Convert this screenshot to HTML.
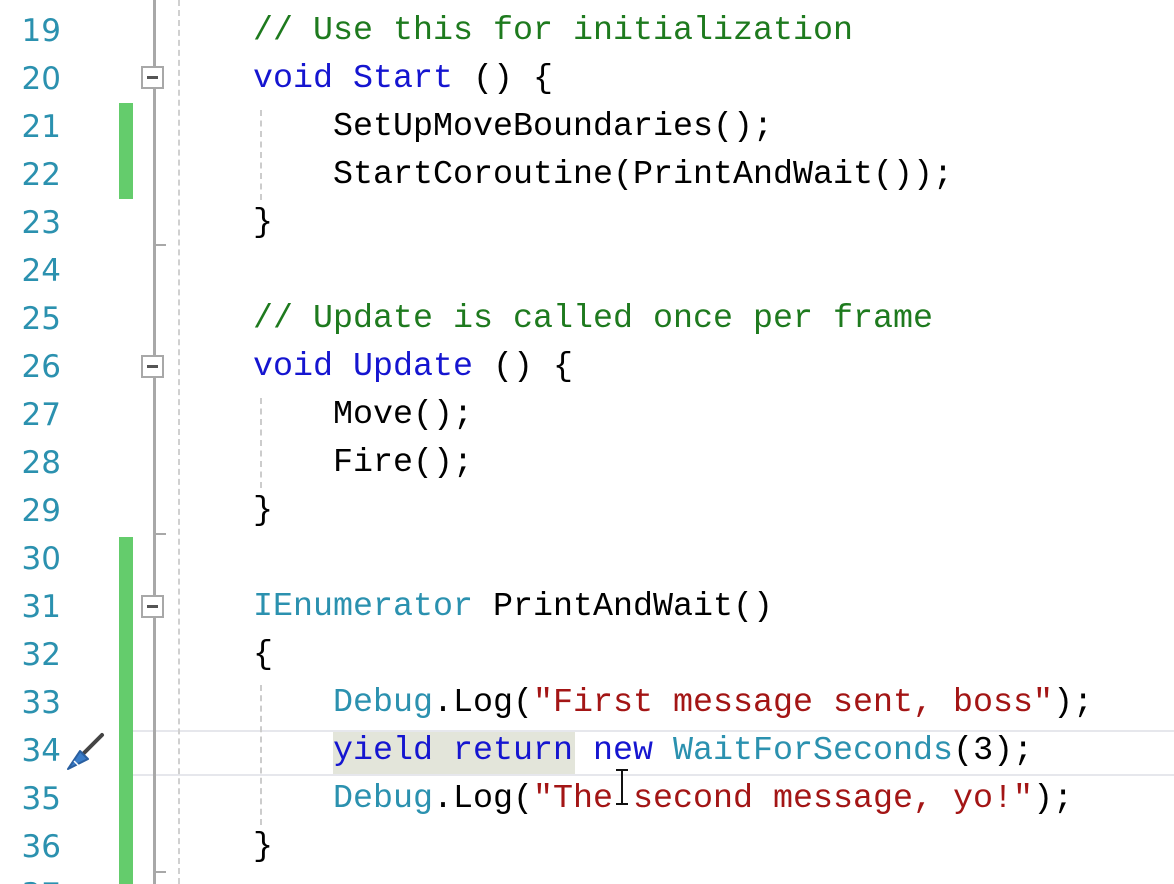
<!DOCTYPE html>
<html><head><meta charset="utf-8"><style>
html,body{margin:0;width:1174px;height:884px;overflow:hidden;}
body{background:#fff;position:relative;font-family:"Liberation Mono",monospace;}
.w{position:absolute;left:0;top:2px;width:1174px;height:884px;}
.n{position:absolute;left:0;width:61px;text-align:right;font-size:31px;color:#2b91af;line-height:48px;height:48px;font-family:"DejaVu Sans","Liberation Sans",sans-serif;}
.c{position:absolute;left:253px;font-size:33.33px;line-height:48px;height:48px;white-space:pre;color:#000;}
.k{color:#1515d0}.t{color:#2b91af}.s{color:#a31515}.g{color:#1e7a1e}
.fold{position:absolute;left:141px;width:19px;height:19px;border:2px solid #a8a8a8;background:#fff;}
.fold:after{content:"";position:absolute;left:4px;top:8px;width:11px;height:3px;background:#555;}
.tick{position:absolute;left:154px;width:12px;height:2px;background:#a8a8a8}
.dg{position:absolute;width:0;border-left:2px dashed #ccc}
</style></head><body>
<div style="position:absolute;left:124px;top:730px;width:1060px;height:42px;border:2px solid #e6e7ec;border-right:none"></div>
<div style="position:absolute;left:333px;top:732px;width:242px;height:42px;background:#e3e5da"></div>
<div style="position:absolute;left:119px;top:103px;width:14px;height:96px;background:#64cc6c"></div>
<div style="position:absolute;left:119px;top:537px;width:14px;height:347px;background:#64cc6c"></div>
<div style="position:absolute;left:153px;top:0;width:3px;height:884px;background:#a8a8a8"></div>
<div class="tick" style="top:244px"></div>
<div class="tick" style="top:533px"></div>
<div class="tick" style="top:871px"></div>
<div class="fold" style="top:66px"></div>
<div class="fold" style="top:355px"></div>
<div class="fold" style="top:595px"></div>
<div class="dg" style="left:178px;top:0;height:884px;border-color:#d0d0d0"></div>
<div class="dg" style="left:260px;top:110px;height:90px"></div>
<div class="dg" style="left:260px;top:398px;height:90px"></div>
<div class="dg" style="left:260px;top:685px;height:140px"></div>
<svg style="position:absolute;left:64px;top:731px" width="44" height="44" viewBox="0 0 44 44"><line x1="20" y1="22" x2="38" y2="4" stroke="#444" stroke-width="4" stroke-linecap="round"/><path d="M4 38 L16 20 L24 28 Z" fill="#3a7cc8" stroke="#2a5fa0" stroke-width="2" stroke-linejoin="round"/><line x1="10" y1="30" x2="16" y2="36" stroke="#fff" stroke-width="1.5"/></svg>
<div class="w">
<div class="n" style="top:5px">19</div><div class="n" style="top:53px">20</div><div class="n" style="top:101px">21</div><div class="n" style="top:149px">22</div><div class="n" style="top:197px">23</div><div class="n" style="top:245px">24</div><div class="n" style="top:293px">25</div><div class="n" style="top:341px">26</div><div class="n" style="top:389px">27</div><div class="n" style="top:437px">28</div><div class="n" style="top:485px">29</div><div class="n" style="top:533px">30</div><div class="n" style="top:581px">31</div><div class="n" style="top:629px">32</div><div class="n" style="top:677px">33</div><div class="n" style="top:725px">34</div><div class="n" style="top:773px">35</div><div class="n" style="top:821px">36</div><div class="n" style="top:869px">37</div>
<div class="c g" style="top:5px">// Use this for initialization</div>
<div class="c" style="top:53px"><span class="k">void Start</span> () {</div>
<div class="c" style="top:101px">    SetUpMoveBoundaries();</div>
<div class="c" style="top:149px">    StartCoroutine(PrintAndWait());</div>
<div class="c" style="top:197px">}</div>
<div class="c g" style="top:293px">// Update is called once per frame</div>
<div class="c" style="top:341px"><span class="k">void Update</span> () {</div>
<div class="c" style="top:389px">    Move();</div>
<div class="c" style="top:437px">    Fire();</div>
<div class="c" style="top:485px">}</div>
<div class="c" style="top:581px"><span class="t">IEnumerator</span> PrintAndWait()</div>
<div class="c" style="top:629px">{</div>
<div class="c" style="top:677px">    <span class="t">Debug</span>.Log(<span class="s">"First message sent, boss"</span>);</div>
<div class="c" style="top:725px">    <span class="k">yield return new</span> <span class="t">WaitForSeconds</span>(3);</div>
<div class="c" style="top:773px">    <span class="t">Debug</span>.Log(<span class="s">"The second message, yo!"</span>);</div>
<div class="c" style="top:821px">}</div>
</div>
<div style="position:absolute;left:621px;top:770px;width:2px;height:34px;background:#111"></div>
<div style="position:absolute;left:616px;top:769px;width:12px;height:2px;background:#111"></div>
<div style="position:absolute;left:616px;top:803px;width:12px;height:2px;background:#111"></div>
</body></html>
